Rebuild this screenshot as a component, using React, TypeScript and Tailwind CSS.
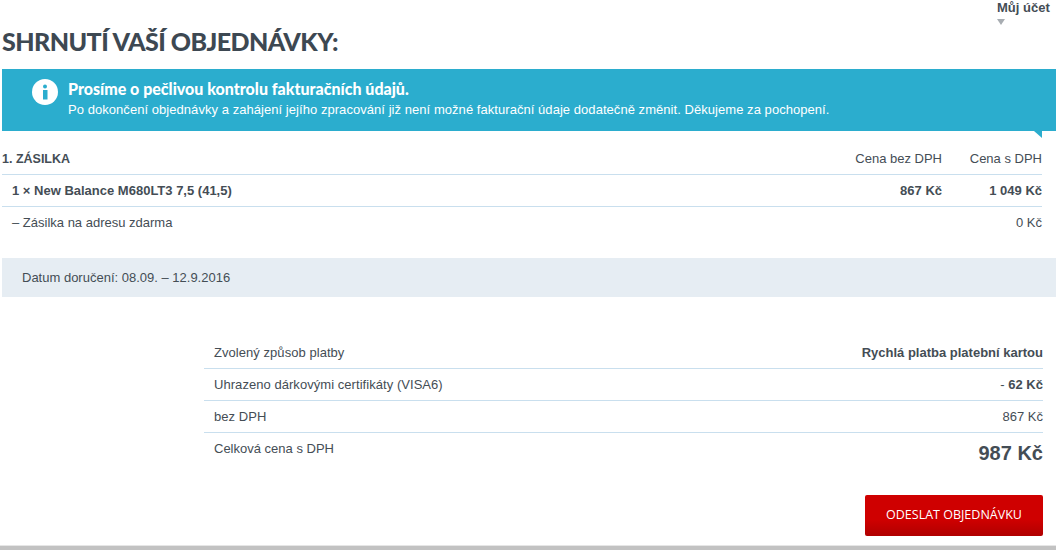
import type { ReactNode } from 'react'

type RowProps = {
  label: string
  children: ReactNode
}

function SummaryRow({ label, children }: RowProps) {
  return (
    <div className="flex h-8 items-center justify-between border-b border-[#c9dfee] pl-2.5">
      <span className="tracking-[0.05px]">{label}</span>
      <span>{children}</span>
    </div>
  )
}

export default function App() {
  return (
    <div className="relative h-[550px] w-[1056px] overflow-hidden bg-white font-['Liberation_Sans',sans-serif] text-[13px] text-[#444d55]">
      <div className="flex h-[69px] justify-between pl-0.5">
        <h1 className="mt-[26px] font-['Lato',sans-serif] text-[25px] leading-[30px] font-black tracking-[-0.55px] text-[#3d4852]">
          SHRNUTÍ VAŠÍ OBJEDNÁVKY:
        </h1>
        <div className="w-[59px] pt-0.5 leading-[12px] font-bold">
          <div>Můj účet</div>
          <div className="mt-[5px] h-0 w-0 border-x-4 border-t-[6px] border-x-transparent border-t-[#a8adb2]" />
        </div>
      </div>

      <div className="relative ml-0.5 flex h-[62px] bg-[#2badce] pt-[10px] pl-[30px] text-white">
        <div className="flex h-[26px] w-[26px] items-center justify-center rounded-full bg-white">
          <svg width="8" height="16" viewBox="0 0 8 16" className="fill-[#2badce]">
            <circle cx="4" cy="2.5" r="2" />
            <rect x="2" y="6" width="4.5" height="9.5" />
          </svg>
        </div>
        <div className="ml-[10px]">
          <div className="font-['Lato',sans-serif] text-base leading-[20px] font-black">
            Prosíme o pečlivou kontrolu fakturačních údajů.
          </div>
          <div className="mt-[2px] leading-[18px] tracking-[0.05px]">
            Po dokončení objednávky a zahájení jejího zpracování již není možné fakturační údaje dodatečně změnit. Děkujeme za pochopení.
          </div>
        </div>
        <div className="absolute top-full right-[14px] h-0 w-0 border-t-[7px] border-l-[8px] border-t-[#2badce] border-l-transparent" />
      </div>

      <div className="mr-[14px] ml-0.5 pt-[13px]">
        <div className="flex h-[31px] items-center justify-between border-b border-[#c9dfee] pb-[1px]">
          <span className="pt-[2px] text-[12.5px] font-bold">1. ZÁSILKA</span>
          <div className="flex">
            <span className="w-[99px] text-right">Cena bez DPH</span>
            <span className="w-[100px] text-right">Cena s DPH</span>
          </div>
        </div>
        <div className="flex h-8 items-center justify-between border-b border-[#c9dfee] pl-2.5 font-bold">
          <span>1 × New Balance M680LT3 7,5 (41,5)</span>
          <div className="flex">
            <span className="w-[99px] text-right">867 Kč</span>
            <span className="w-[100px] text-right">1 049 Kč</span>
          </div>
        </div>
        <div className="flex h-8 items-center justify-between pl-2.5">
          <span>– Zásilka na adresu zdarma</span>
          <span>0 Kč</span>
        </div>
      </div>

      <div className="mt-[19px] ml-0.5 flex h-[39px] items-center bg-[#e6edf3] pl-5">
        Datum doručení: 08.09. – 12.9.2016
      </div>

      <div className="mt-10 mr-[13px] ml-[204px]">
        <SummaryRow label="Zvolený způsob platby">
          <b>Rychlá platba platební kartou</b>
        </SummaryRow>
        <SummaryRow label="Uhrazeno dárkovými certifikáty (VISA6)">
          - <b>62 Kč</b>
        </SummaryRow>
        <SummaryRow label="bez DPH">867 Kč</SummaryRow>
        <div className="flex h-[41px] items-start justify-between pl-2.5">
          <span className="pt-1.5">Celková cena s DPH</span>
          <span className="pt-[8px] text-[20px] leading-6 font-bold">987 Kč</span>
        </div>
      </div>

      <div className="mt-[21px] mr-[13px] flex justify-end">
        <button className="h-[41px] w-[178px] rounded-[2px] bg-gradient-to-b from-[#cf0000] from-60% to-[#b00000] font-['Open_Sans',sans-serif] text-[12.5px] text-white">
          ODESLAT OBJEDNÁVKU
        </button>
      </div>

      <div className="absolute right-0 bottom-0 left-0 h-[5px] border-t border-[#e6e6e6] bg-[#c2c2c2]" />
    </div>
  )
}
